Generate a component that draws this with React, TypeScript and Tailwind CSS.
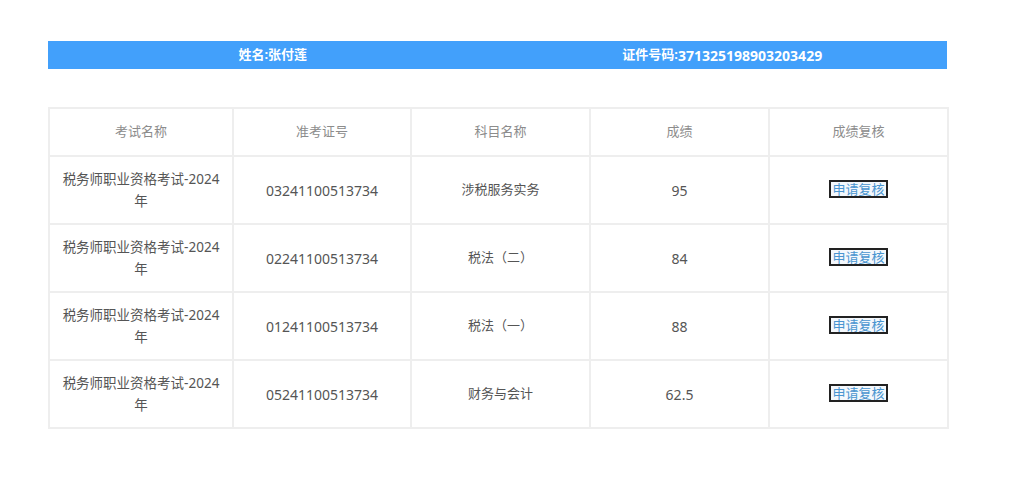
import React from "react";

const rows = [
  { exam: "税务师职业资格考试-2024年", no: "03241100513734", subj: "涉税服务实务", score: "95" },
  { exam: "税务师职业资格考试-2024年", no: "02241100513734", subj: "税法（二）", score: "84" },
  { exam: "税务师职业资格考试-2024年", no: "01241100513734", subj: "税法（一）", score: "88" },
  { exam: "税务师职业资格考试-2024年", no: "05241100513734", subj: "财务与会计", score: "62.5" },
];

const font = { fontFamily: '"Microsoft YaHei", "Noto Sans", "Noto Sans CJK SC", sans-serif' };

export default function App() {
  return (
    <div className="w-[1012px] h-[494px] bg-white pt-[41px] pl-[48px]" style={font}>
      <div className="w-[899px] h-[28px] bg-[#42a0fb] flex text-white font-bold text-[13px]">
        <div className="w-1/2 flex items-center justify-center">姓名:张付莲</div>
        <div className="w-1/2 flex items-center justify-center">
          证件号码:<span className="text-[14px]">371325198903203429</span>
        </div>
      </div>
      <table className="mt-[38px] w-[899px] border-collapse table-fixed text-[13px]">
        <colgroup>
          <col className="w-[184px]" />
          <col className="w-[178px]" />
          <col className="w-[179px]" />
          <col className="w-[179px]" />
          <col className="w-[179px]" />
        </colgroup>
        <thead>
          <tr className="h-[48px] text-[#8c8c8c]">
            {["考试名称", "准考证号", "科目名称", "成绩", "成绩复核"].map((h) => (
              <th key={h} className="border-2 border-[#eeeeee] font-normal text-center">
                {h}
              </th>
            ))}
          </tr>
        </thead>
        <tbody className="text-[#555555]">
          {rows.map((r) => (
            <tr key={r.no} className="h-[68px]">
              <td className="border-2 border-[#eeeeee] text-center px-[10px] leading-[22px] text-[13.5px]">{r.exam}</td>
              <td className="border-2 border-[#eeeeee] text-center text-[14px]">{r.no}</td>
              <td className="border-2 border-[#eeeeee] text-center">{r.subj}</td>
              <td className="border-2 border-[#eeeeee] text-center text-[14px]">{r.score}</td>
              <td className="border-2 border-[#eeeeee] text-center">
                <span className="inline-block border-2 border-[#222] bg-[#f4f8fc] text-[#4a95d0] text-[13px] leading-[14px] px-px">
                  申请复核
                </span>
              </td>
            </tr>
          ))}
        </tbody>
      </table>
    </div>
  );
}
